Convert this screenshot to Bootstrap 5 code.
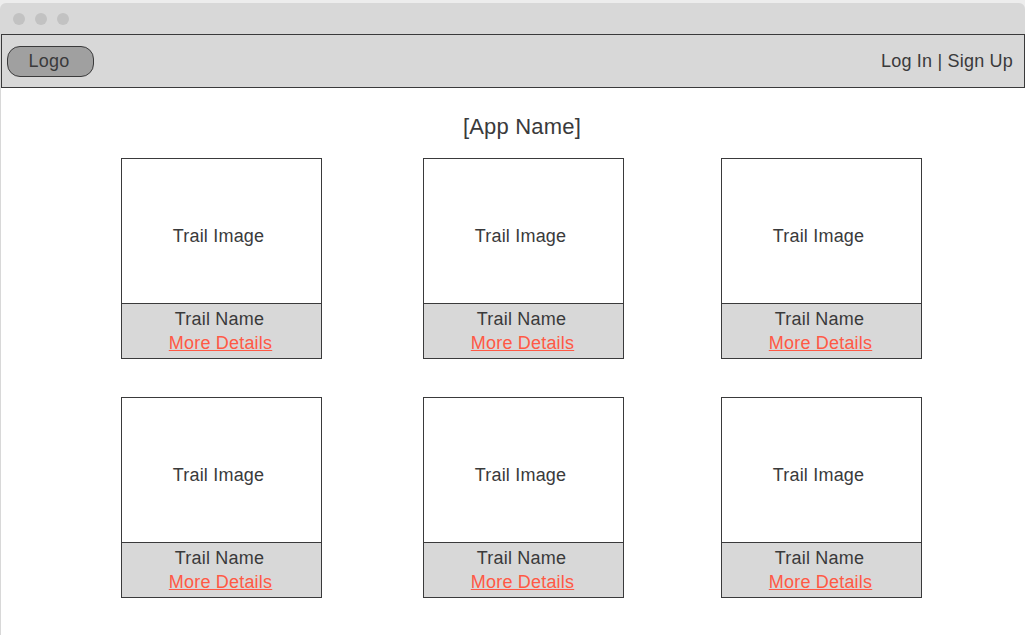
<!DOCTYPE html>
<html lang="en">
<head>
<meta charset="utf-8">
<meta name="viewport" content="width=device-width, initial-scale=1">
<title>Trails</title>
<link href="https://cdn.jsdelivr.net/npm/bootstrap@5.3.0/dist/css/bootstrap.min.css" rel="stylesheet">
<style>
  :root { --ink: #3a3a3b; --panel: #d8d8d8; }
  body { font-family: "Liberation Sans", Arial, sans-serif; font-size: 18px; line-height: 24px; letter-spacing: .2px; color: var(--ink); background: #ededed; }
  .browser { height: calc(100vh - 3px); margin-top: 3px; background: var(--panel); border-radius: 6px 6px 0 0; }
  .titlebar { height: 31px; padding-left: 13px; gap: 10px; }
  .window-dot { width: 12px; height: 12px; background: #c2c2c2; }
  .page { margin-left: 1px; background: #fff; }
  .site-nav { height: 54px; padding: 0 11px 0 5px; border: 1px solid var(--ink); background: var(--panel); }
  .logo { width: 87px; height: 31px; padding-right: 3px; border: 1px solid var(--ink); border-radius: 13px; background: #a0a0a0; }
  .app-title { margin: 24px 0 17px 18px; font-size: 22px; line-height: 29px; font-weight: 400; letter-spacing: .2px; }
  .trails { display: grid; grid-template-columns: 302px 298px 201px; grid-auto-rows: 201px; row-gap: 38px; margin-left: 120px; }
  .trail { width: 201px; border: 1px solid var(--ink); border-radius: 0; --bs-card-color: var(--ink); color: var(--ink); }
  .trail-image { height: 144px; padding: 10px 6px 0 0; }
  .trail-info { height: 55px; padding: 3px 2px 0 0; border-top: 1px solid var(--ink); background: var(--panel); }
  .trail-name { padding-right: 2px; }
  .trail-info a { color: #ff5945; text-decoration-thickness: 1px; text-underline-offset: 1px; }
</style>
</head>
<body>
<div class="browser d-flex flex-column overflow-hidden">
  <div class="titlebar d-flex align-items-center flex-shrink-0">
    <span class="window-dot rounded-circle"></span>
    <span class="window-dot rounded-circle"></span>
    <span class="window-dot rounded-circle"></span>
  </div>
  <div class="page flex-grow-1">
    <nav class="site-nav d-flex align-items-center justify-content-between">
      <a class="logo d-flex align-items-center justify-content-center text-reset text-decoration-none" href="#">Logo</a>
      <div><a class="text-reset text-decoration-none" href="#">Log In</a> | <a class="text-reset text-decoration-none" href="#">Sign Up</a></div>
    </nav>
    <main>
      <h1 class="app-title text-center">[App Name]</h1>
      <div class="trails">
        <div class="card trail"><div class="trail-image d-flex align-items-center justify-content-center">Trail Image</div><div class="trail-info text-center"><div class="trail-name">Trail Name</div><a href="#">More Details</a></div></div>
        <div class="card trail"><div class="trail-image d-flex align-items-center justify-content-center">Trail Image</div><div class="trail-info text-center"><div class="trail-name">Trail Name</div><a href="#">More Details</a></div></div>
        <div class="card trail"><div class="trail-image d-flex align-items-center justify-content-center">Trail Image</div><div class="trail-info text-center"><div class="trail-name">Trail Name</div><a href="#">More Details</a></div></div>
        <div class="card trail"><div class="trail-image d-flex align-items-center justify-content-center">Trail Image</div><div class="trail-info text-center"><div class="trail-name">Trail Name</div><a href="#">More Details</a></div></div>
        <div class="card trail"><div class="trail-image d-flex align-items-center justify-content-center">Trail Image</div><div class="trail-info text-center"><div class="trail-name">Trail Name</div><a href="#">More Details</a></div></div>
        <div class="card trail"><div class="trail-image d-flex align-items-center justify-content-center">Trail Image</div><div class="trail-info text-center"><div class="trail-name">Trail Name</div><a href="#">More Details</a></div></div>
      </div>
    </main>
  </div>
</div>
<script src="https://cdn.jsdelivr.net/npm/bootstrap@5.3.0/dist/js/bootstrap.bundle.min.js"></script>
</body>
</html>
